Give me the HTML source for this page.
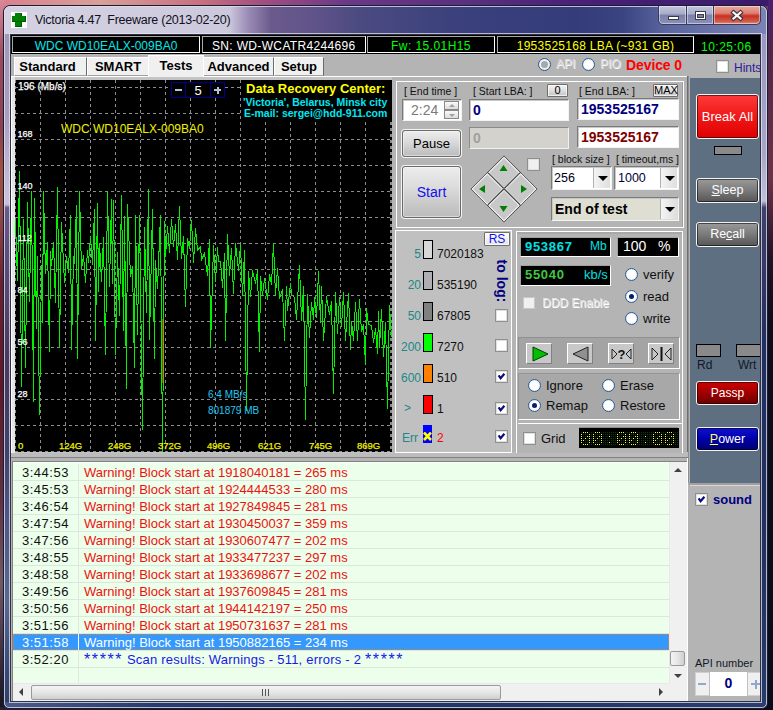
<!DOCTYPE html>
<html><head><meta charset="utf-8">
<style>
*{box-sizing:border-box;margin:0;padding:0}
html,body{width:773px;height:710px;overflow:hidden}
body{position:relative;font-family:"Liberation Sans",sans-serif;font-size:12px;
background:
 radial-gradient(ellipse 300px 250px at 0px 0px,#c87a88 0%,rgba(200,122,136,0) 100%),
 linear-gradient(to bottom,#7a3a6a 0%,#6a2a5a 30%,#4a2040 60%,#1a1020 80%,#0c0a14 100%);}
.a{position:absolute}
.frame{left:3px;top:5px;width:765px;height:704px;border:1px solid #1c1c2c;border-radius:7px 7px 6px 6px;overflow:hidden;background:#6a6a98;box-shadow:inset 0 0 0 1px rgba(230,230,245,.8)}
.client{left:10px;top:34px;width:751px;height:668px;background:#b4b4b4;border:1px solid #303040;overflow:hidden}
.capbtn{top:0px;height:19px;border:1px solid #3a3a5a;border-top:none;
background:linear-gradient(to bottom,#c0c4dc 0%,#a8acc8 45%,#7a80a8 50%,#8a90b8 100%);box-shadow:inset 0 0 0 1px rgba(255,255,255,.45)}
.info{left:0px;top:0px;width:749px;height:19px;background:#000}
.ibox{top:1px;height:17px;padding-top:2px;border:1px solid #a8a8a8;border-bottom-color:#fff;border-right-color:#fff;color:#fff;font-size:12px;line-height:15px;white-space:pre}
.tab{top:22px;height:19px;background:#f0f0f0;border-top:1px solid #fff;border-left:1px solid #fff;border-right:1px solid #6a6a6a;border-bottom:1px solid #a0a0a0;font-weight:bold;font-size:13px;line-height:18px;color:#000;text-align:center;white-space:pre}
.gl{color:#fff;font-size:9px;line-height:10px;white-space:pre;-webkit-text-stroke:.25px #fff}
.gx{top:406px;color:#f0f000;font-size:9.5px;line-height:10px;white-space:pre;-webkit-text-stroke:.25px #f0f000}

.P{left:-11px;top:-35px;width:773px;height:710px}
.lbl{font-size:10.5px;line-height:12px;color:#101010;white-space:pre}
.inp{background:#fff;border-top:1px solid #7a7a7a;border-left:1px solid #7a7a7a;border-bottom:1px solid #f4f4f4;border-right:1px solid #f4f4f4;box-shadow:inset 1px 1px 0 #c8c8c8}
.btn{border:1px solid #6e6e6e;border-radius:3px;background:linear-gradient(to bottom,#f4f4f4 0%,#e2e2e2 45%,#d0d0d0 75%,#c4c4c4 100%);box-shadow:inset 0 0 0 1px rgba(255,255,255,.7);text-align:center;white-space:pre;color:#000}
.sbtn{border:1px solid #888;background:linear-gradient(to bottom,#fafafa,#dcdcdc);text-align:center;font-size:11px;line-height:10px;color:#000}
.ddb{width:17px;background:linear-gradient(to right,#f4f4f4,#dedede);border-left:1px solid #b0b0b0}
.ddb:after{content:"";position:absolute;left:4px;top:8px;border-left:5px solid transparent;border-right:5px solid transparent;border-top:5px solid #000}
.cb{width:13px;height:13px;background:#fff;border:1px solid #8e8f8f;box-shadow:inset 0 0 0 1px #e0e0e0}
.rad{width:13px;height:13px;border-radius:50%;background:#fff;border:1.4px solid #2a5a90;box-shadow:inset 0 0 0 1px #e8eef4}
.rad.on:after{content:"";position:absolute;left:3px;top:3px;width:5px;height:5px;border-radius:50%;background:#0c1a70}

.leg{left:396px;margin-top:1px;width:25px;text-align:right;font-size:12px;line-height:12px;color:#208888;white-space:pre}
.sw{left:423px;width:10px;height:19px;border:1px solid #000}
.num{left:437px;margin-top:1px;font-size:12px;line-height:12px;color:#101010;white-space:pre}

.dbox{background:#000;border-top:1px solid #a0a0a0;border-left:1px solid #a0a0a0;border-bottom:1px solid #fff;border-right:1px solid #fff}
.rl{left:643px;font-size:13px;line-height:14px;color:#101010;white-space:pre}
.rl2{font-size:13px;line-height:14px;color:#101010;white-space:pre}
.pb{width:26px;height:21px;background:#c8c8c8;border-top:1px solid #fff;border-left:1px solid #fff;border-bottom:1px solid #808080;border-right:1px solid #808080}
.pb svg{position:absolute;left:0;top:0}

.rb{border:1px solid #f4f4f4;border-radius:3px;color:#fff;text-align:center;white-space:pre;box-shadow:inset 0 0 0 1px rgba(0,0,0,.55)}

.lt{left:9px;font-size:13px;line-height:17px;color:#101010;white-space:pre;letter-spacing:.5px}
.lw{left:71px;font-size:13px;line-height:17px;color:#f01010;white-space:pre}

.dis{font-size:12px;line-height:15px;color:#d8d8d8;text-shadow:1px 1px 0 #f8f8f8;white-space:pre}
.pbtn{border-color:#6a6a6a;background:linear-gradient(to bottom,#ececec 0%,#dcdcdc 40%,#c8c8c8 75%,#bcbcbc 100%);box-shadow:0 0 0 1px #f4f4f4,inset 0 0 0 1px rgba(255,255,255,.45)}
</style></head><body>

<div class="a" style="left:0;top:0;width:773px;height:6px;background:linear-gradient(to right,#d88090 0%,#d8a098 13%,#c87080 26%,#a05080 34%,#6a3888 45%,#5a3080 60%,#4a2078 75%,#3a1a6a 100%)"></div>
<div class="a" style="left:0;top:0;width:4px;height:710px;background:linear-gradient(to bottom,#d88a98 0%,#9a4a60 8%,#8a4050 18%,#a05040 24%,#904848 30%,#6a2030 40%,#601828 55%,#603040 70%,#705868 82%,#403040 92%,#141420 100%)"></div>
<div class="a" style="left:768px;top:0;width:5px;height:710px;background:linear-gradient(to bottom,#4a2070 0%,#502848 8%,#6a3448 25%,#502840 29%,#201428 36%,#0e0c1a 45%,#0c0c18 100%)"></div>
<div class="a" style="left:0;top:707px;width:773px;height:3px;background:linear-gradient(to right,#2a2030,#10101c 30%,#0c0a14)"></div>
<div class="a frame">
  <div class="a" style="left:0;top:0;width:763px;height:28px;border-radius:6px 6px 0 0;background:linear-gradient(to right,#d4d2e2 0%,#cdc9dd 29.5%,#9a8cb6 32%,#6a5a8c 35%,#62548a 40%,#4a4a80 47%,#3a407c 60%,#343c7a 75%,#3a4480 81%,#5c66a0 87%,#7a84b4 100%)"></div>
  <div class="a" style="left:0;top:28px;width:6px;height:668px;background:linear-gradient(to bottom,#a098b8 0%,#a89fc0 12%,#c8c0d8 24%,#c8c0d8 25.5%,#6a5a8a 26%,#5a4a78 36%,#4a3a60 48%,#42406a 62%,#505888 73%,#586890 85%,#3a4a78 95%,#304068 100%)"></div>
  <div class="a" style="left:757px;top:28px;width:6px;height:668px;background:linear-gradient(to bottom,#9a98c0 0%,#a8a6c8 18%,#c0c0d8 25%,#40406a 26%,#38386a 35%,#203060 45%,#203060 70%,#283c68 100%)"></div>
  <div class="a" style="left:0;top:696px;width:763px;height:6px;border-radius:0 0 5px 5px;background:linear-gradient(to right,#4a5a88 0%,#2a3a70 20%,#243468 60%,#2c3c70 100%)"></div>
  <div class="a" style="left:0;top:0;width:763px;height:702px;border:1px solid rgba(220,222,240,.8);border-radius:6px 6px 5px 5px"></div>
  <!-- icon -->
  <div class="a" style="left:7px;top:6px;width:16px;height:16px;background:#fff">
    <div class="a" style="left:4px;top:1px;width:7px;height:14px;background:#008000;box-shadow:inset -1px -1px 0 #005800"></div>
    <div class="a" style="left:1px;top:4px;width:14px;height:6px;background:#008000;box-shadow:inset -1px -1px 0 #005800"></div>
  </div>
  <div class="a" style="left:31px;top:6px;font-size:12.5px;line-height:16px;letter-spacing:-.26px;color:#101020;white-space:pre">Victoria 4.47  Freeware (2013-02-20)</div>
  <!-- caption buttons -->
  <div class="a capbtn" style="left:654px;width:29px;border-radius:0 0 0 5px"></div>
  <div class="a" style="left:664px;top:10px;width:11px;height:4px;background:#fff;border:1px solid #3a3a4a"></div>
  <div class="a capbtn" style="left:682px;width:28px"></div>
  <div class="a" style="left:691px;top:5px;width:11px;height:9px;border:1px solid #3a3a4a;background:#fff"></div>
  <div class="a" style="left:693px;top:8px;width:7px;height:4px;background:#7a80a8;border:1px solid #3a3a4a"></div>
  <div class="a capbtn" style="left:709px;width:48px;border-radius:0 0 5px 0;background:linear-gradient(to bottom,#e8a8a0 0%,#dc8070 40%,#c83020 55%,#d05a48 85%,#e09080 100%)"></div>
  <svg class="a" style="left:726px;top:3px" width="14" height="13" viewBox="0 0 14 13"><path d="M3.5 3.5 L10.5 9.5 M10.5 3.5 L3.5 9.5" stroke="#3a3a48" stroke-width="4.4" stroke-linecap="square"/><path d="M3.5 3.5 L10.5 9.5 M10.5 3.5 L3.5 9.5" stroke="#fafafa" stroke-width="2.2" stroke-linecap="square"/></svg>
</div>
<div class="a" style="left:9px;top:33px;width:753px;height:670px;border:1px solid rgba(225,228,245,.75)"></div>
<div class="a client">
  <!-- info bar -->
  <div class="a info">
    <div class="a ibox" style="left:1px;width:188px;color:#00e8e8;text-align:center">WDC WD10EALX-009BA0</div>
    <div class="a ibox" style="left:191px;width:164px;padding-left:9px;letter-spacing:.34px">SN: WD-WCATR4244696</div>
    <div class="a ibox" style="left:356px;width:128px;color:#00ff00;text-align:center;letter-spacing:.44px">Fw: 15.01H15</div>
    <div class="a ibox" style="left:486px;width:197px;color:#ffff00;text-align:center;letter-spacing:.27px">1953525168 LBA (~931 GB)</div>
    <div class="a" style="left:690px;top:5px;font-size:12px;line-height:15px;color:#00ff00;letter-spacing:.5px">10:25:06</div>
  </div>

  <!-- graph -->
  <div class="a" style="left:0px;top:41px;width:385px;height:380px;background:#c4c4c4;border-top:1px solid #fff;border-left:1px solid #fff"></div>
  <div class="a" style="left:1px;top:42px;width:3px;height:378px;background:#e6e6e6"></div>
  <svg class="a" style="left:4px;top:45px" width="377" height="372" viewBox="0 0 377 372" shape-rendering="crispEdges"><rect width="377" height="372" fill="#000"/><path d="M0.5 0V372 M25.5 0V372 M50.5 0V372 M75.5 0V372 M100.5 0V372 M125.5 0V372 M150.5 0V372 M175.5 0V372 M200.5 0V372 M225.5 0V372 M250.5 0V372 M275.5 0V372 M300.5 0V372 M325.5 0V372 M350.5 0V372 M375.5 0V372 M376.5 0V372 M0 7.5H377 M0 33.5H377 M0 59.5H377 M0 85.5H377 M0 111.5H377 M0 137.5H377 M0 163.5H377 M0 189.5H377 M0 215.5H377 M0 241.5H377 M0 267.5H377 M0 293.5H377 M0 319.5H377 M0 345.5H377 M0 371.5H377" stroke="#8c8c8c" stroke-width="1" stroke-dasharray="3 3" fill="none"/><path d="M0 141 L2 200 L4 91 L6 306 L8 139 L10 287 L12 122 L14 221 L16 111 L18 321 L19 118 L21 248 L22 176 L24 334 L26 185 L27 242 L28 111 L30 193 L32 162 L34 271 L35 171 L36 185 L38 162 L40 222 L42 107 L44 267 L46 142 L49 202 L51 176 L53 192 L55 135 L56 269 L58 176 L59 183 L61 125 L62 278 L64 111 L66 189 L68 175 L70 202 L72 170 L73 182 L75 156 L77 184 L79 129 L80 260 L82 123 L83 211 L84 163 L86 201 L88 157 L90 274 L92 111 L94 206 L96 119 L97 203 L98 120 L100 274 L102 172 L104 235 L106 115 L108 250 L109 136 L111 308 L112 124 L115 196 L117 186 L119 287 L120 135 L122 254 L124 135 L127 349 L129 147 L131 232 L133 109 L134 259 L137 129 L139 278 L140 180 L142 208 L145 135 L147 371 L149 141 L150 176 L152 146 L154 172 L156 139 L158 166 L160 144 L162 179 L164 126 L166 178 L168 156 L170 226 L172 158 L174 168 L176 140 L178 182 L180 148 L182 170 L185 166 L186 179 L189 173 L192 195 L194 159 L195 267 L198 165 L200 201 L202 167 L203 181 L205 181 L207 207 L209 173 L210 260 L212 154 L214 195 L216 168 L218 213 L220 163 L223 190 L225 164 L227 215 L229 170 L231 330 L233 191 L235 216 L237 190 L240 203 L242 190 L244 271 L245 196 L247 215 L249 198 L252 219 L254 194 L256 204 L258 163 L260 215 L262 188 L264 218 L267 209 L269 260 L271 206 L272 230 L275 203 L276 214 L279 217 L281 239 L284 185 L286 240 L288 206 L290 339 L292 214 L294 257 L296 222 L298 239 L299 217 L301 237 L303 191 L305 242 L306 206 L308 260 L311 216 L314 234 L316 221 L318 313 L320 212 L322 253 L324 217 L326 246 L328 212 L330 260 L333 213 L335 269 L336 241 L338 260 L340 222 L342 260 L344 219 L346 251 L348 244 L350 284 L351 228 L353 244 L356 245 L358 262 L360 248 L362 273 L363 231 L364 267 L366 229 L368 276 L370 242 L372 328 L374 225 L376 257" stroke="#00f000" stroke-width="1" fill="none" transform="translate(.5 .5)"/><path d="M147.5 239V303" stroke="#ff1010" stroke-width="1"/></svg>
  <div class="a gl" style="left:7px;top:47px;font-size:10px">196 (Mb/s)</div>
  <div class="a gl" style="left:6.5px;top:94px">168</div>
  <div class="a gl" style="left:6.5px;top:146px">140</div>
  <div class="a gl" style="left:6.5px;top:198px">112</div>
  <div class="a gl" style="left:6.5px;top:250px">84</div>
  <div class="a gl" style="left:6.5px;top:302px">56</div>
  <div class="a gl" style="left:6.5px;top:354px">28</div>
  <div class="a gx" style="left:7px">0</div>
  <div class="a gx" style="left:48px">124G</div>
  <div class="a gx" style="left:97px">248G</div>
  <div class="a gx" style="left:147px">372G</div>
  <div class="a gx" style="left:196px">496G</div>
  <div class="a gx" style="left:247px">621G</div>
  <div class="a gx" style="left:298px">745G</div>
  <div class="a gx" style="left:346px">869G</div>
  <div class="a" style="left:50px;top:87px;font-size:12px;color:#f0f000;white-space:pre">WDC WD10EALX-009BA0</div>
  <div class="a" style="left:197px;top:354px;font-size:10px;color:#20c8f0;white-space:pre">6,4 MB/s</div>
  <div class="a" style="left:197px;top:370px;font-size:10px;color:#20c8f0;white-space:pre">801879 MB</div>
  <!-- spinner 5 -->
  <div class="a" style="left:160px;top:47px;width:54px;height:16px;border:1px solid #000090;background:#000"></div>
  <div class="a" style="left:174px;top:47px;width:1px;height:16px;background:#000090"></div>
  <div class="a" style="left:199px;top:47px;width:1px;height:16px;background:#000090"></div>
  <div class="a" style="left:164px;top:54px;width:7px;height:2px;background:#b0c4e0"></div>
  <div class="a" style="left:175px;top:47px;width:24px;height:17px;color:#fff;font-size:13px;line-height:17px;text-align:center">5</div>
  <div class="a" style="left:203px;top:54px;width:7px;height:2px;background:#b0c4e0"></div>
  <div class="a" style="left:205.5px;top:51.5px;width:2px;height:7px;background:#b0c4e0"></div>
  <!-- data recovery -->
  <div class="a" style="left:230px;top:45px;width:151px;height:41px;background:#000"></div>
  <div class="a" style="left:235px;top:46px;font-size:13px;font-weight:bold;color:#ffff00;white-space:pre">Data Recovery Center:</div>
  <div class="a" style="left:232px;top:61px;font-size:10.5px;font-weight:bold;color:#00e8f0;white-space:pre">'Victoria', Belarus, Minsk city</div>
  <div class="a" style="left:233px;top:72px;font-size:10.5px;font-weight:bold;color:#00e8f0;white-space:pre">E-mail: sergei@hdd-911.com</div>

  <div class="a P">
  <!-- tab strip bottom line -->
  <div class="a" style="left:11px;top:76px;width:677px;height:1px;background:#fff"></div>
  <div class="a" style="left:392px;top:77px;width:296px;height:380px;background:#b4b4b4"></div>
  <div class="a" style="left:687px;top:76px;width:1px;height:381px;background:#6e6e6e"></div>
  <div class="a" style="left:392px;top:452px;width:296px;height:4px;background:#bcbcbc"></div>
  <!-- panel 1 -->
  <div class="a" style="left:396px;top:81px;width:288px;height:147px;border:1px solid #fff;border-right-color:#fff;background:#b4b4b4"></div>
  <div class="a" style="left:682px;top:82px;width:1px;height:145px;background:#a0a0a0"></div>
  <div class="a lbl" style="left:404px;top:85px">[ End time ]</div>
  <div class="a inp" style="left:402px;top:99px;width:60px;height:22px"></div>
  <div class="a" style="left:411px;top:102px;font-size:14px;color:#7a7a7a;white-space:pre">2:24</div>
  <div class="a sbtn" style="left:444px;top:101px;width:15px;height:9px"></div>
  <div class="a sbtn" style="left:444px;top:110px;width:15px;height:9px"></div>
  <div class="a" style="left:449px;top:104px;border-left:3px solid transparent;border-right:3px solid transparent;border-bottom:3px solid #a0a0a0"></div>
  <div class="a" style="left:449px;top:114px;border-left:3px solid transparent;border-right:3px solid transparent;border-top:3px solid #a0a0a0"></div>
  <div class="a lbl" style="left:473px;top:85px">[ Start LBA: ]</div>
  <div class="a btn" style="left:547px;top:84px;width:21px;height:13px;border-radius:1px;font-size:11px;line-height:11px">0</div>
  <div class="a inp" style="left:469px;top:99px;width:100px;height:22px"></div>
  <div class="a" style="left:473px;top:102px;font-size:14px;font-weight:bold;color:#000080">0</div>
  <div class="a" style="left:469px;top:127px;width:100px;height:22px;background:#d4d2cc;border-top:1px solid #8a8a8a;border-left:1px solid #8a8a8a;border-bottom:1px solid #f0f0f0;border-right:1px solid #f0f0f0"></div>
  <div class="a" style="left:473px;top:130px;font-size:14px;font-weight:bold;color:#a0a0a0">0</div>
  <div class="a lbl" style="left:579px;top:85px">[ End LBA: ]</div>
  <div class="a btn" style="left:653px;top:84px;width:25px;height:13px;border-radius:1px;font-size:11px;line-height:11px">MAX</div>
  <div class="a inp" style="left:577px;top:98px;width:102px;height:22px"></div>
  <div class="a" style="left:581px;top:101px;font-size:14px;font-weight:bold;color:#000080">1953525167</div>
  <div class="a inp" style="left:577px;top:126px;width:102px;height:22px"></div>
  <div class="a" style="left:581px;top:129px;font-size:14px;font-weight:bold;color:#800000">1953525167</div>
  <div class="a btn pbtn" style="left:402px;top:130px;width:59px;height:27px;font-size:13px;line-height:25px">Pause</div>
  <div class="a btn pbtn" style="left:402px;top:166px;width:59px;height:52px;font-size:14px;line-height:50px;color:#1010f0">Start</div>
  <!-- diamond -->
  <svg class="a" style="left:469px;top:154px" width="70" height="70" viewBox="0 0 70 70">
    <g transform="translate(35 35) rotate(45)">
      <rect x="-23.5" y="-23.5" width="47" height="47" fill="#1a1a1a"/>
      <rect x="-22.5" y="-22.5" width="21.5" height="21.5" fill="#c8c8c8" stroke="#fff" stroke-width="1"/>
      <rect x="1" y="-22.5" width="21.5" height="21.5" fill="#c8c8c8" stroke="#fff" stroke-width="1"/>
      <rect x="-22.5" y="1" width="21.5" height="21.5" fill="#c8c8c8" stroke="#fff" stroke-width="1"/>
      <rect x="1" y="1" width="21.5" height="21.5" fill="#c8c8c8" stroke="#fff" stroke-width="1"/>
      <path d="M-22 -0.5 H22 M-0.5 -22 V22" stroke="#777" stroke-width="1"/>
    </g>
    <path d="M34.5 11 L38.5 17 L30.5 17Z" fill="#008000"/>
    <path d="M34.5 58 L38.5 52 L30.5 52Z" fill="#008000"/>
    <path d="M10 35 L16 31 L16 39Z" fill="#008000"/>
    <path d="M58 35 L52 31 L52 39Z" fill="#008000"/>
  </svg>
  <div class="a cb" style="left:527px;top:158px;background:#f0f0f0"></div>
  <div class="a lbl" style="left:552px;top:153px">[ block size ]</div>
  <div class="a lbl" style="left:616px;top:153px">[ timeout,ms ]</div>
  <div class="a inp" style="left:551px;top:166px;width:61px;height:24px"></div>
  <div class="a" style="left:554px;top:171px;font-size:12.5px;color:#000020;white-space:pre">256</div>
  <div class="a ddb" style="left:593px;top:168px;height:20px"></div>
  <div class="a inp" style="left:614px;top:166px;width:65px;height:24px"></div>
  <div class="a" style="left:618px;top:171px;font-size:12.5px;color:#000040;white-space:pre">1000</div>
  <div class="a ddb" style="left:660px;top:168px;height:20px"></div>
  <div class="a inp" style="left:551px;top:197px;width:128px;height:24px;background:#dedfd2"></div>
  <div class="a" style="left:555px;top:201px;font-size:14px;font-weight:bold;color:#000;white-space:pre">End of test</div>
  <div class="a ddb" style="left:660px;top:199px;height:20px"></div>

  <!-- legend section -->
  <div class="a" style="left:395px;top:230px;width:117px;height:223px;background:#c0c0c0;border-top:1px solid #fff;border-left:1px solid #fff;border-right:1px solid #fff;border-bottom:1px solid #fff"></div>
  <div class="a btn" style="left:484px;top:232px;width:26px;height:14px;border-radius:1px;font-size:12px;line-height:12px;color:#1010f0;background:linear-gradient(to bottom,#fff,#e4e4e4)">RS</div>
  <div class="a" style="left:493px;top:259px;width:18px;height:44px">
    <div class="a" style="left:-17px;top:13px;width:52px;height:18px;transform:rotate(90deg);font-size:14px;font-weight:bold;color:#000080;white-space:pre;line-height:18px;text-align:center">to log:</div>
  </div>
  <div class="a leg" style="top:247px">5</div><div class="a sw" style="top:240px;background:#d8d8d8"></div><div class="a num" style="top:247px">7020183</div>
  <div class="a leg" style="top:278px">20</div><div class="a sw" style="top:271px;background:#aeaeb4"></div><div class="a num" style="top:278px">535190</div>
  <div class="a leg" style="top:309px">50</div><div class="a sw" style="top:302px;background:#808080"></div><div class="a num" style="top:309px">67805</div>
  <div class="a leg" style="top:340px">200</div><div class="a sw" style="top:333px;background:#00ff00"></div><div class="a num" style="top:340px">7270</div>
  <div class="a leg" style="top:371px">600</div><div class="a sw" style="top:364px;background:#ff8000"></div><div class="a num" style="top:371px">510</div>
  <div class="a leg" style="top:401px;left:404px;width:auto;text-align:left">&gt;</div><div class="a sw" style="top:395px;background:#ff0000"></div><div class="a num" style="top:402px">1</div>
  <div class="a leg" style="top:431px;left:402px;width:auto;text-align:left">Err</div>
  <div class="a" style="left:423px;top:425px;width:9px;height:18px;background:#0000ff"></div>
  <svg class="a" style="left:423px;top:432px" width="9" height="9"><path d="M1 0.5 L8 8 M8 0.5 L1 8" stroke="#ffff00" stroke-width="2.6"/></svg>
  <div class="a num" style="top:431px;left:437px;color:#ff0000">2</div>
  <div class="a cb" style="left:495px;top:309px"></div>
  <div class="a cb" style="left:495px;top:339px"></div>
  <div class="a cb on" style="left:495px;top:370px"><svg class="a" style="left:0;top:0" width="11" height="11"><path d="M2.6 4.4 L4.6 7.2 L8.4 2.8" stroke="#0a0a80" stroke-width="2.2" fill="none" stroke-linecap="butt" stroke-linejoin="miter"/></svg></div>
  <div class="a cb on" style="left:495px;top:402px"><svg class="a" style="left:0;top:0" width="11" height="11"><path d="M2.6 4.4 L4.6 7.2 L8.4 2.8" stroke="#0a0a80" stroke-width="2.2" fill="none" stroke-linecap="butt" stroke-linejoin="miter"/></svg></div>
  <div class="a cb on" style="left:495px;top:430px"><svg class="a" style="left:0;top:0" width="11" height="11"><path d="M2.6 4.4 L4.6 7.2 L8.4 2.8" stroke="#0a0a80" stroke-width="2.2" fill="none" stroke-linecap="butt" stroke-linejoin="miter"/></svg></div>
  <!-- right section -->
  <div class="a" style="left:516px;top:231px;width:167px;height:222px;background:#b4b4b4;border:1px solid #fff;border-bottom:none"></div>
  <div class="a" style="left:517px;top:232px;width:165px;height:2px;background:#a8a8a8"></div>
  <div class="a dbox" style="left:520px;top:237px;width:91px;height:20px"></div>
  <div class="a" style="left:525px;top:239px;font-size:13px;font-weight:bold;letter-spacing:.7px;color:#00e0e0">953867</div>
  <div class="a" style="left:590px;top:239px;font-size:12px;color:#00e0e0">Mb</div>
  <div class="a dbox" style="left:617px;top:237px;width:62px;height:20px"></div>
  <div class="a" style="left:623px;top:238px;font-size:14px;color:#fff;white-space:pre">100</div>
  <div class="a" style="left:658px;top:238px;font-size:14px;color:#fff;white-space:pre">%</div>
  <div class="a dbox" style="left:520px;top:265px;width:91px;height:21px"></div>
  <div class="a" style="left:525px;top:267px;font-size:13px;font-weight:bold;letter-spacing:.7px;color:#40c840">55040</div>
  <div class="a" style="left:584px;top:267px;font-size:13px;color:#00e0e0">kb/s</div>
  <div class="a" style="left:523px;top:297px;width:12px;height:12px;background:#f0f0f0;border:1px solid #c8c8c8"></div>
  <div class="a" style="left:542px;top:296px;font-size:12px;color:#e0e0e0;text-shadow:1px 1px 0 #fff,-.5px -.5px 0 #a0a0a0;white-space:pre">DDD Enable</div>
  <div class="a rad" style="left:625px;top:268px"></div><div class="a rl" style="top:268px">verify</div>
  <div class="a rad on" style="left:625px;top:290px"></div><div class="a rl" style="top:290px">read</div>
  <div class="a rad" style="left:625px;top:312px"></div><div class="a rl" style="top:312px">write</div>
  <!-- play group -->
  <div class="a" style="left:518px;top:337px;width:162px;height:32px;background:#a4a4a4;border-bottom:1px solid #fff;border-right:1px solid #fff;border-top:1px solid #909090;border-left:1px solid #909090"></div>
  <div class="a pb" style="left:526px;top:343px"><svg width="25" height="20"><path d="M6 3 L21 10 L6 17Z" fill="#00c000" stroke="#004000" stroke-width="1"/></svg></div>
  <div class="a pb" style="left:567px;top:343px"><svg width="25" height="20"><path d="M20 3 L20 17 L5 10Z" fill="#909090" stroke="#202020" stroke-width="1"/></svg></div>
  <div class="a pb" style="left:608px;top:343px"><svg width="25" height="20"><path d="M3 5 L8 10 L3 15Z" fill="none" stroke="#202020"/><path d="M22 5 L17 10 L22 15Z" fill="none" stroke="#202020"/><text x="12.5" y="15" font-size="13" font-weight="bold" text-anchor="middle" font-family="Liberation Sans" fill="#101010">?</text></svg></div>
  <div class="a pb" style="left:648px;top:343px"><svg width="25" height="20"><path d="M3 4 L9 10 L3 16Z" fill="none" stroke="#202020"/><path d="M22 4 L16 10 L22 16Z" fill="none" stroke="#202020"/><rect x="11.5" y="3" width="2" height="14" fill="#101010"/></svg></div>
  <!-- radio group -->
  <div class="a" style="left:518px;top:373px;width:162px;height:47px;background:#a8a8a8;border-bottom:1px solid #fff;border-right:1px solid #fff;border-top:1px solid #959595;border-left:1px solid #959595"></div>
  <div class="a rad" style="left:528px;top:379px"></div><div class="a rl2" style="left:546px;top:379px">Ignore</div>
  <div class="a rad on" style="left:528px;top:399px"></div><div class="a rl2" style="left:546px;top:399px">Remap</div>
  <div class="a rad" style="left:602px;top:379px"></div><div class="a rl2" style="left:620px;top:379px">Erase</div>
  <div class="a rad" style="left:602px;top:399px"></div><div class="a rl2" style="left:620px;top:399px">Restore</div>
  <div class="a" style="left:518px;top:423px;width:164px;height:1px;background:#fff"></div>
  <div class="a cb" style="left:523px;top:432px;width:13px;height:13px"></div>
  <div class="a" style="left:541px;top:431px;font-size:13px;color:#101010">Grid</div>
  <div class="a" style="left:579px;top:427px;width:100px;height:21px;background:#000;border-bottom:1px solid #fff;border-right:1px solid #fff;border-top:1px solid #909090;border-left:1px solid #909090"></div>
  <svg class="a" style="left:579px;top:428px" width="100" height="20" shape-rendering="crispEdges"><rect width="100" height="20" fill="#000"/><path d="M2 4h1v1h-1zM2 16h1v1h-1zM4 6h1v1h-1zM4 8h1v1h-1zM4 10h1v1h-1zM4 14h1v1h-1zM6 6h1v1h-1zM6 8h1v1h-1zM6 12h1v1h-1zM6 14h1v1h-1zM8 6h1v1h-1zM8 10h1v1h-1zM8 12h1v1h-1zM8 14h1v1h-1zM10 4h1v1h-1zM10 16h1v1h-1zM12 4h1v1h-1zM12 6h1v1h-1zM12 8h1v1h-1zM12 10h1v1h-1zM12 12h1v1h-1zM12 14h1v1h-1zM12 16h1v1h-1zM14 4h1v1h-1zM14 16h1v1h-1zM16 6h1v1h-1zM16 8h1v1h-1zM16 10h1v1h-1zM16 14h1v1h-1zM18 6h1v1h-1zM18 8h1v1h-1zM18 12h1v1h-1zM18 14h1v1h-1zM20 6h1v1h-1zM20 10h1v1h-1zM20 12h1v1h-1zM20 14h1v1h-1zM22 4h1v1h-1zM22 16h1v1h-1zM24 4h1v1h-1zM24 6h1v1h-1zM24 8h1v1h-1zM24 10h1v1h-1zM24 12h1v1h-1zM24 14h1v1h-1zM24 16h1v1h-1zM26 4h1v1h-1zM26 6h1v1h-1zM26 8h1v1h-1zM26 10h1v1h-1zM26 12h1v1h-1zM26 14h1v1h-1zM26 16h1v1h-1zM28 4h1v1h-1zM28 6h1v1h-1zM28 8h1v1h-1zM28 10h1v1h-1zM28 12h1v1h-1zM28 14h1v1h-1zM28 16h1v1h-1zM30 4h1v1h-1zM30 6h1v1h-1zM30 10h1v1h-1zM30 12h1v1h-1zM30 16h1v1h-1zM32 4h1v1h-1zM32 6h1v1h-1zM32 8h1v1h-1zM32 10h1v1h-1zM32 12h1v1h-1zM32 14h1v1h-1zM32 16h1v1h-1zM34 4h1v1h-1zM34 6h1v1h-1zM34 8h1v1h-1zM34 10h1v1h-1zM34 12h1v1h-1zM34 14h1v1h-1zM34 16h1v1h-1zM36 4h1v1h-1zM36 6h1v1h-1zM36 8h1v1h-1zM36 10h1v1h-1zM36 12h1v1h-1zM36 14h1v1h-1zM36 16h1v1h-1zM38 4h1v1h-1zM38 16h1v1h-1zM40 6h1v1h-1zM40 8h1v1h-1zM40 10h1v1h-1zM40 14h1v1h-1zM42 6h1v1h-1zM42 8h1v1h-1zM42 12h1v1h-1zM42 14h1v1h-1zM44 6h1v1h-1zM44 10h1v1h-1zM44 12h1v1h-1zM44 14h1v1h-1zM46 4h1v1h-1zM46 16h1v1h-1zM48 4h1v1h-1zM48 6h1v1h-1zM48 8h1v1h-1zM48 10h1v1h-1zM48 12h1v1h-1zM48 14h1v1h-1zM48 16h1v1h-1zM50 4h1v1h-1zM50 16h1v1h-1zM52 6h1v1h-1zM52 8h1v1h-1zM52 10h1v1h-1zM52 14h1v1h-1zM54 6h1v1h-1zM54 8h1v1h-1zM54 12h1v1h-1zM54 14h1v1h-1zM56 6h1v1h-1zM56 10h1v1h-1zM56 12h1v1h-1zM56 14h1v1h-1zM58 4h1v1h-1zM58 16h1v1h-1zM60 4h1v1h-1zM60 6h1v1h-1zM60 8h1v1h-1zM60 10h1v1h-1zM60 12h1v1h-1zM60 14h1v1h-1zM60 16h1v1h-1zM62 4h1v1h-1zM62 6h1v1h-1zM62 8h1v1h-1zM62 10h1v1h-1zM62 12h1v1h-1zM62 14h1v1h-1zM62 16h1v1h-1zM64 4h1v1h-1zM64 6h1v1h-1zM64 8h1v1h-1zM64 10h1v1h-1zM64 12h1v1h-1zM64 14h1v1h-1zM64 16h1v1h-1zM66 4h1v1h-1zM66 6h1v1h-1zM66 10h1v1h-1zM66 12h1v1h-1zM66 16h1v1h-1zM68 4h1v1h-1zM68 6h1v1h-1zM68 8h1v1h-1zM68 10h1v1h-1zM68 12h1v1h-1zM68 14h1v1h-1zM68 16h1v1h-1zM70 4h1v1h-1zM70 6h1v1h-1zM70 8h1v1h-1zM70 10h1v1h-1zM70 12h1v1h-1zM70 14h1v1h-1zM70 16h1v1h-1zM72 4h1v1h-1zM72 6h1v1h-1zM72 8h1v1h-1zM72 10h1v1h-1zM72 12h1v1h-1zM72 14h1v1h-1zM72 16h1v1h-1zM74 4h1v1h-1zM74 16h1v1h-1zM76 6h1v1h-1zM76 8h1v1h-1zM76 10h1v1h-1zM76 14h1v1h-1zM78 6h1v1h-1zM78 8h1v1h-1zM78 12h1v1h-1zM78 14h1v1h-1zM80 6h1v1h-1zM80 10h1v1h-1zM80 12h1v1h-1zM80 14h1v1h-1zM82 4h1v1h-1zM82 16h1v1h-1zM84 4h1v1h-1zM84 6h1v1h-1zM84 8h1v1h-1zM84 10h1v1h-1zM84 12h1v1h-1zM84 14h1v1h-1zM84 16h1v1h-1zM86 4h1v1h-1zM86 16h1v1h-1zM88 6h1v1h-1zM88 8h1v1h-1zM88 10h1v1h-1zM88 14h1v1h-1zM90 6h1v1h-1zM90 8h1v1h-1zM90 12h1v1h-1zM90 14h1v1h-1zM92 6h1v1h-1zM92 10h1v1h-1zM92 12h1v1h-1zM92 14h1v1h-1zM94 4h1v1h-1zM94 16h1v1h-1zM96 4h1v1h-1zM96 6h1v1h-1zM96 8h1v1h-1zM96 10h1v1h-1zM96 12h1v1h-1zM96 14h1v1h-1zM96 16h1v1h-1zM98 4h1v1h-1zM98 6h1v1h-1zM98 8h1v1h-1zM98 10h1v1h-1zM98 12h1v1h-1zM98 14h1v1h-1zM98 16h1v1h-1z" fill="#0c3a0c"/><path d="M2 6h1v1h-1zM2 8h1v1h-1zM2 10h1v1h-1zM2 12h1v1h-1zM2 14h1v1h-1zM4 4h1v1h-1zM4 12h1v1h-1zM4 16h1v1h-1zM6 4h1v1h-1zM6 10h1v1h-1zM6 16h1v1h-1zM8 4h1v1h-1zM8 8h1v1h-1zM8 16h1v1h-1zM10 6h1v1h-1zM10 8h1v1h-1zM10 10h1v1h-1zM10 12h1v1h-1zM10 14h1v1h-1zM14 6h1v1h-1zM14 8h1v1h-1zM14 10h1v1h-1zM14 12h1v1h-1zM14 14h1v1h-1zM16 4h1v1h-1zM16 12h1v1h-1zM16 16h1v1h-1zM18 4h1v1h-1zM18 10h1v1h-1zM18 16h1v1h-1zM20 4h1v1h-1zM20 8h1v1h-1zM20 16h1v1h-1zM22 6h1v1h-1zM22 8h1v1h-1zM22 10h1v1h-1zM22 12h1v1h-1zM22 14h1v1h-1zM30 8h1v1h-1zM30 14h1v1h-1zM38 6h1v1h-1zM38 8h1v1h-1zM38 10h1v1h-1zM38 12h1v1h-1zM38 14h1v1h-1zM40 4h1v1h-1zM40 12h1v1h-1zM40 16h1v1h-1zM42 4h1v1h-1zM42 10h1v1h-1zM42 16h1v1h-1zM44 4h1v1h-1zM44 8h1v1h-1zM44 16h1v1h-1zM46 6h1v1h-1zM46 8h1v1h-1zM46 10h1v1h-1zM46 12h1v1h-1zM46 14h1v1h-1zM50 6h1v1h-1zM50 8h1v1h-1zM50 10h1v1h-1zM50 12h1v1h-1zM50 14h1v1h-1zM52 4h1v1h-1zM52 12h1v1h-1zM52 16h1v1h-1zM54 4h1v1h-1zM54 10h1v1h-1zM54 16h1v1h-1zM56 4h1v1h-1zM56 8h1v1h-1zM56 16h1v1h-1zM58 6h1v1h-1zM58 8h1v1h-1zM58 10h1v1h-1zM58 12h1v1h-1zM58 14h1v1h-1zM66 8h1v1h-1zM66 14h1v1h-1zM74 6h1v1h-1zM74 8h1v1h-1zM74 10h1v1h-1zM74 12h1v1h-1zM74 14h1v1h-1zM76 4h1v1h-1zM76 12h1v1h-1zM76 16h1v1h-1zM78 4h1v1h-1zM78 10h1v1h-1zM78 16h1v1h-1zM80 4h1v1h-1zM80 8h1v1h-1zM80 16h1v1h-1zM82 6h1v1h-1zM82 8h1v1h-1zM82 10h1v1h-1zM82 12h1v1h-1zM82 14h1v1h-1zM86 6h1v1h-1zM86 8h1v1h-1zM86 10h1v1h-1zM86 12h1v1h-1zM86 14h1v1h-1zM88 4h1v1h-1zM88 12h1v1h-1zM88 16h1v1h-1zM90 4h1v1h-1zM90 10h1v1h-1zM90 16h1v1h-1zM92 4h1v1h-1zM92 8h1v1h-1zM92 16h1v1h-1zM94 6h1v1h-1zM94 8h1v1h-1zM94 10h1v1h-1zM94 12h1v1h-1zM94 14h1v1h-1z" fill="#ffff10"/></svg>

  <!-- right panel -->
  <div class="a" style="left:690px;top:78px;width:71px;height:405px;background:#5f6f82"></div>
  <div class="a" style="left:688px;top:76px;width:1px;height:407px;background:#8c8c8c"></div>
  <div class="a rb" style="left:696px;top:94px;width:63px;height:45px;line-height:43px;font-size:13px;background:linear-gradient(to bottom,#ff3a3a 0%,#f01818 50%,#e00000 100%)">Break All</div>
  <div class="a" style="left:714px;top:146px;width:28px;height:9px;background:#8a8a8a;border:1px solid #000"></div>
  <div class="a rb" style="left:696px;top:178px;width:63px;height:25px;line-height:23px;font-size:12.5px;background:linear-gradient(to bottom,#9a9a9a 0%,#7a7a7a 50%,#555 100%)"><u>S</u>leep</div>
  <div class="a rb" style="left:696px;top:222px;width:63px;height:25px;line-height:23px;font-size:12.5px;background:linear-gradient(to bottom,#9a9a9a 0%,#7a7a7a 50%,#555 100%)">Re<u>c</u>all</div>
  <div class="a" style="left:696px;top:344px;width:25px;height:13px;background:#8a8a8a;border:1px solid #000"></div>
  <div class="a" style="left:736px;top:344px;width:26px;height:13px;background:#8a8a8a;border:1px solid #000"></div>
  <div class="a" style="left:697px;top:358px;font-size:12px;color:#101828">Rd</div>
  <div class="a" style="left:738px;top:358px;font-size:12px;color:#101828">Wrt</div>
  <div class="a rb" style="left:696px;top:381px;width:63px;height:24px;line-height:22px;font-size:12px;background:linear-gradient(to bottom,#d00000 0%,#a00000 50%,#6a0000 100%)">Passp</div>
  <div class="a rb" style="left:696px;top:427px;width:63px;height:24px;line-height:22px;font-size:12.5px;background:linear-gradient(to bottom,#1010d0 0%,#0000a8 50%,#000070 100%)"><u style="color:#ffff60">P</u>ower</div>
  <!-- lower right panel -->
  <div class="a" style="left:689px;top:483px;width:72px;height:219px;background:#b4b4b4;border-top:2px solid #a0a0a0"></div>
  <div class="a" style="left:690px;top:485px;width:71px;height:1px;background:#d8d8d8"></div>
  <div class="a cb on" style="left:695px;top:493px;width:13px;height:13px"><svg class="a" style="left:0;top:0" width="11" height="11"><path d="M2.6 4.4 L4.6 7.2 L8.4 2.8" stroke="#0a0a80" stroke-width="2.2" fill="none" stroke-linecap="butt" stroke-linejoin="miter"/></svg></div>
  <div class="a" style="left:713px;top:492px;font-size:13px;font-weight:bold;color:#000080">sound</div>
  <div class="a" style="left:695px;top:657px;font-size:11px;color:#101828;white-space:pre">API number</div>
  <div class="a" style="left:695px;top:672px;width:66px;height:24px;background:#f0f0f0;border:1px solid #d0d0d0"></div>
  <div class="a" style="left:709px;top:672px;width:39px;height:24px;background:#fff;border-left:1px solid #c0c0c0;border-right:1px solid #c0c0c0;font-size:14px;font-weight:bold;color:#000080;text-align:center;line-height:23px">0</div>
  <div class="a" style="left:698px;top:683px;width:8px;height:2px;background:#90a8d0"></div>
  <div class="a" style="left:751px;top:683px;width:9px;height:2px;background:#90a8d0"></div>
  <div class="a" style="left:754.5px;top:679.5px;width:2px;height:9px;background:#90a8d0"></div>

  <!-- log -->
  <div class="a" style="left:11px;top:453px;width:677px;height:4px;background:#bcbcbc"></div>
  <div class="a" style="left:11px;top:457px;width:677px;height:1px;background:#808080"></div>
  <div class="a" style="left:11px;top:458px;width:677px;height:244px;background:#b4b4b4"></div>
  <div class="a" style="left:12px;top:461px;width:675px;height:241px;background:#f0f0f0;border-top:1px solid #828282;border-left:1px solid #828282"></div>
  <div class="a" style="left:687px;top:458px;width:1px;height:244px;background:#fff"></div>
  <div class="a" style="left:13px;top:462px;width:656px;height:221px;background:#ebffeb;border-top:1px solid #f8fff8"></div>
  <div class="a" style="left:13px;top:464px;width:656px;height:204px;overflow:hidden;background:repeating-linear-gradient(to bottom,transparent 0px,transparent 16px,#dde6dd 16px,#dde6dd 17px)">
    <div class="a" style="left:65px;top:0;width:1px;height:220px;background:#e0e6e0"></div>
    <div class="a lt" style="top:0px">3:44:53</div><div class="a lw" style="top:0px">Warning! Block start at 1918040181 = 265 ms</div><div class="a lt" style="top:17px">3:45:53</div><div class="a lw" style="top:17px">Warning! Block start at 1924444533 = 280 ms</div><div class="a lt" style="top:34px">3:46:54</div><div class="a lw" style="top:34px">Warning! Block start at 1927849845 = 281 ms</div><div class="a lt" style="top:51px">3:47:54</div><div class="a lw" style="top:51px">Warning! Block start at 1930450037 = 359 ms</div><div class="a lt" style="top:68px">3:47:56</div><div class="a lw" style="top:68px">Warning! Block start at 1930607477 = 202 ms</div><div class="a lt" style="top:85px">3:48:55</div><div class="a lw" style="top:85px">Warning! Block start at 1933477237 = 297 ms</div><div class="a lt" style="top:102px">3:48:58</div><div class="a lw" style="top:102px">Warning! Block start at 1933698677 = 202 ms</div><div class="a lt" style="top:119px">3:49:56</div><div class="a lw" style="top:119px">Warning! Block start at 1937609845 = 281 ms</div><div class="a lt" style="top:136px">3:50:56</div><div class="a lw" style="top:136px">Warning! Block start at 1944142197 = 250 ms</div><div class="a lt" style="top:153px">3:51:56</div><div class="a lw" style="top:153px">Warning! Block start at 1950731637 = 281 ms</div><div class="a" style="left:0;top:170px;width:656px;height:16px;background:#3399ff;outline:1px dotted #e08030;outline-offset:-1px"></div><div class="a" style="left:65px;top:170px;width:1px;height:16px;background:#fff"></div><div class="a lt" style="top:170px;color:#fff">3:51:58</div><div class="a lw" style="top:170px;color:#fff">Warning! Block start at 1950882165 = 234 ms</div><div class="a lt" style="top:187px">3:52:20</div><div class="a lw" style="top:187px;color:#1818e8"><span style="font-size:16px;letter-spacing:1.6px;vertical-align:-1px">*****</span><span style="letter-spacing:.22px"> Scan results: Warnings - 511, errors - 2 </span><span style="font-size:16px;letter-spacing:1.6px;vertical-align:-1px">*****</span></div>
  </div>
  <div class="a" style="left:78px;top:668px;width:1px;height:15px;background:#e0e6e0"></div>
  <!-- vertical scrollbar -->
  <div class="a" style="left:669px;top:462px;width:17px;height:221px;background:#f0f0f0;border-left:1px solid #e8e8e8"></div>
  <div class="a" style="left:674px;top:468px;border-left:4px solid transparent;border-right:4px solid transparent;border-bottom:4px solid #404040"></div>
  <div class="a" style="left:674px;top:674px;border-left:4px solid transparent;border-right:4px solid transparent;border-top:4px solid #404040"></div>
  <div class="a" style="left:670px;top:651px;width:15px;height:15px;border:1px solid #9a9a9a;border-radius:2px;background:linear-gradient(to right,#f4f4f4 0%,#e6e6e6 50%,#cfcfcf 100%)"></div>
  <!-- horizontal scrollbar -->
  <div class="a" style="left:13px;top:683px;width:656px;height:17px;background:#f0f0f0;border-top:1px solid #e8e8e8"></div>
  <div class="a" style="left:19px;top:688px;border-top:4px solid transparent;border-bottom:4px solid transparent;border-right:4px solid #404040"></div>
  <div class="a" style="left:659px;top:688px;border-top:4px solid transparent;border-bottom:4px solid transparent;border-left:4px solid #404040"></div>
  <div class="a" style="left:31px;top:685px;width:470px;height:15px;border:1px solid #9a9a9a;border-radius:2px;background:linear-gradient(to bottom,#f4f4f4 0%,#e6e6e6 50%,#cfcfcf 100%)"></div>
  <div class="a" style="left:262px;top:689px;width:7px;height:7px;background:repeating-linear-gradient(to right,#555 0 1px,transparent 1px 3px)"></div>

  <!-- tab row right -->
  <div class="a rad on" style="left:538px;top:58px;background:radial-gradient(circle at 50% 40%,#fff 0%,#f0f0f0 60%,#d8d8d8 100%)"></div>
  <div class="a" style="left:541px;top:61px;width:7px;height:7px;border-radius:50%;background:#a8a8a8;z-index:3"></div>
  <div class="a dis" style="left:556px;top:57px">API</div>
  <div class="a rad" style="left:582px;top:58px"></div>
  <div class="a dis" style="left:600px;top:57px">PIO</div>
  <div class="a" style="left:626px;top:57px;font-size:14px;font-weight:bold;color:#ff0000;letter-spacing:-.1px;white-space:pre">Device 0</div>
  <div class="a cb" style="left:716px;top:60px"></div>
  <div class="a" style="left:734px;top:61px;width:26px;overflow:hidden;font-size:12px;line-height:15px;color:#2a1a9a;white-space:pre">Hints</div>
  </div>
  <!-- tabs -->
  <div class="a tab" style="left:3px;width:73px;padding-right:6px">Standard</div>
  <div class="a tab" style="left:76px;width:62px">SMART</div>
  <div class="a tab" style="left:137px;top:20px;height:22px;width:56px;border-bottom:none;border-right-color:#fff;line-height:19px;z-index:2">Tests</div>
  <div class="a tab" style="left:192px;width:71px">Advanced</div>
  <div class="a tab" style="left:263px;width:50px">Setup</div>
</div>

</body></html>
